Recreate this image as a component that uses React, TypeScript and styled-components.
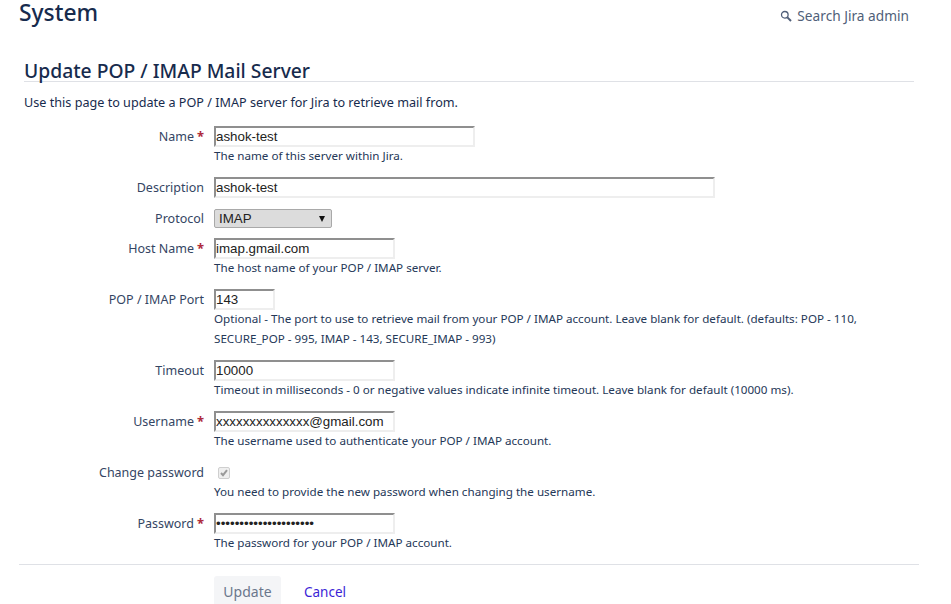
import React from 'react';
import styled, { createGlobalStyle } from 'styled-components';

const GlobalStyle = createGlobalStyle`
  html, body {
    margin: 0;
    padding: 0;
    background: #fff;
    overflow: hidden;
  }
  body {
    font-family: "Noto Sans", "Open Sans", sans-serif;
    font-size: 12px;
    color: #172b4d;
  }
`;

const Page = styled.div`
  width: 951px;
  height: 604px;
  overflow: hidden;
`;

const TopBar = styled.header`
  display: flex;
  justify-content: space-between;
  align-items: flex-start;
  height: 60px;
  padding: 0 42px 0 19px;
`;

const PageTitle = styled.h1`
  margin: 0;
  font-size: 22.8px;
  font-weight: 500;
  line-height: 26px;
  color: #172b4d;
`;

const AdminSearch = styled.a`
  display: flex;
  align-items: center;
  gap: 5px;
  margin-top: 6px;
  font-size: 13.7px;
  line-height: 20px;
  color: #505f79;
`;

const Content = styled.main`
  padding: 0 37px 0 24px;
`;

const FormTitle = styled.h2`
  margin: 0;
  height: 21px;
  border-bottom: 1px solid #dfe1e6;
  font-size: 19.3px;
  font-weight: 500;
  line-height: 21px;
  color: #172b4d;
`;

const Intro = styled.p`
  margin: 10px 0 14px;
  font-size: 12.64px;
  line-height: 20px;
`;

const Row = styled.div`
  display: grid;
  grid-template-columns: 180px 1fr;
  column-gap: 10px;
  padding-bottom: 10px;
`;

const Label = styled.label`
  height: 19px;
  padding-top: 1px;
  text-align: right;
  font-size: 12.5px;
  line-height: 20px;
  color: #344563;
`;

const Required = styled.span`
  margin-left: 3px;
  font-size: 13px;
  font-weight: 700;
  line-height: 1;
  color: #ae2a3c;
`;

const Field = styled.div`
  min-width: 0;
`;

const TextInput = styled.input<{ $size: number }>`
  display: block;
  box-sizing: border-box;
  width: ${({ $size }) => $size}px;
  height: 21px;
  margin: 0;
  padding: 1px 0;
  border-width: 2px;
  border-style: solid;
  border-color: #8f8f8f #eeeeee #eeeeee #8f8f8f;
  border-radius: 0;
  background: #fff;
  font-family: "Liberation Sans", Arial, sans-serif;
  font-size: 13.33px;
  color: #222;
  outline: none;
`;

const ProtocolSelect = styled.div`
  display: flex;
  align-items: center;
  justify-content: space-between;
  box-sizing: border-box;
  width: 118px;
  height: 19px;
  margin-top: 1px;
  padding: 0 4px;
  border: 1px solid #a9a9a9;
  border-radius: 2px;
  background: #dcdcdc;
  font-family: "Liberation Sans", Arial, sans-serif;
  font-size: 13.33px;
  color: #222;
`;

const Caret = styled.span`
  width: 0;
  height: 0;
  margin-right: 2px;
  border-left: 3.5px solid transparent;
  border-right: 3.5px solid transparent;
  border-top: 6px solid #111;
`;

const Help = styled.div`
  margin-top: -1px;
  padding-bottom: 1px;
  font-size: 11.65px;
  line-height: 20px;
  color: #253858;
`;

const CheckBox = styled.span`
  display: flex;
  align-items: center;
  justify-content: center;
  box-sizing: border-box;
  width: 12px;
  height: 12px;
  margin: 5px 0 4px 4px;
  border: 1px solid #cfcfcf;
  border-radius: 2px;
  background: #efefef;
`;

const Actions = styled.div`
  display: flex;
  align-items: center;
  gap: 23px;
  margin: 0 -5px;
  padding: 11px 0 0 195px;
  border-top: 1px solid #dfe1e6;
`;

const UpdateButton = styled.button`
  width: 67px;
  height: 30px;
  padding: 0;
  border: none;
  border-radius: 3px;
  background: #f4f5f7;
  font-family: inherit;
  font-size: 14px;
  color: #6b778c;
`;

const CancelLink = styled.a`
  padding-top: 2px;
  font-size: 13.5px;
  color: #3b1fd6;
`;

function SearchIcon() {
  return (
    <svg width="12" height="12" viewBox="0 0 12 12" fill="none" stroke="#505f79">
      <circle cx="4.8" cy="4.8" r="3.3" strokeWidth="1.3" />
      <path d="M7.4 7.4 11 11" strokeWidth="2" />
    </svg>
  );
}

type FormRowProps = {
  label: string;
  required?: boolean;
  children: React.ReactNode;
};

function FormRow({ label, required, children }: FormRowProps) {
  return (
    <Row>
      <Label>
        {label}
        {required && <Required>*</Required>}
      </Label>
      <Field>{children}</Field>
    </Row>
  );
}

export default function App() {
  return (
    <Page>
      <GlobalStyle />
      <TopBar>
        <PageTitle>System</PageTitle>
        <AdminSearch>
          <SearchIcon />
          Search Jira admin
        </AdminSearch>
      </TopBar>
      <Content>
        <FormTitle>Update POP / IMAP Mail Server</FormTitle>
        <Intro>Use this page to update a POP / IMAP server for Jira to retrieve mail from.</Intro>
        <FormRow label="Name" required>
          <TextInput $size={261} defaultValue="ashok-test" />
          <Help>The name of this server within Jira.</Help>
        </FormRow>
        <FormRow label="Description">
          <TextInput $size={501} defaultValue="ashok-test" />
        </FormRow>
        <FormRow label="Protocol">
          <ProtocolSelect>
            IMAP
            <Caret />
          </ProtocolSelect>
        </FormRow>
        <FormRow label="Host Name" required>
          <TextInput $size={181} defaultValue="imap.gmail.com" />
          <Help>The host name of your POP / IMAP server.</Help>
        </FormRow>
        <FormRow label="POP / IMAP Port">
          <TextInput $size={61} defaultValue="143" />
          <Help>
            Optional - The port to use to retrieve mail from your POP / IMAP account. Leave blank for default. (defaults: POP - 110,
            <br />
            SECURE_POP - 995, IMAP - 143, SECURE_IMAP - 993)
          </Help>
        </FormRow>
        <FormRow label="Timeout">
          <TextInput $size={181} defaultValue="10000" />
          <Help>Timeout in milliseconds - 0 or negative values indicate infinite timeout. Leave blank for default (10000 ms).</Help>
        </FormRow>
        <FormRow label="Username" required>
          <TextInput $size={181} defaultValue="xxxxxxxxxxxxxx@gmail.com" />
          <Help>The username used to authenticate your POP / IMAP account.</Help>
        </FormRow>
        <FormRow label="Change password">
          <CheckBox>
            <svg width="8" height="8" viewBox="0 0 8 8" fill="none" stroke="#9a9a9a" strokeWidth="2">
              <path d="M1 4l2 2.2L7 1.2" />
            </svg>
          </CheckBox>
          <Help>You need to provide the new password when changing the username.</Help>
        </FormRow>
        <FormRow label="Password" required>
          <TextInput $size={181} type="password" defaultValue="xxxxxxxxxxxxxxxxxxxxx" />
          <Help>The password for your POP / IMAP account.</Help>
        </FormRow>
        <Actions>
          <UpdateButton>Update</UpdateButton>
          <CancelLink>Cancel</CancelLink>
        </Actions>
      </Content>
    </Page>
  );
}
